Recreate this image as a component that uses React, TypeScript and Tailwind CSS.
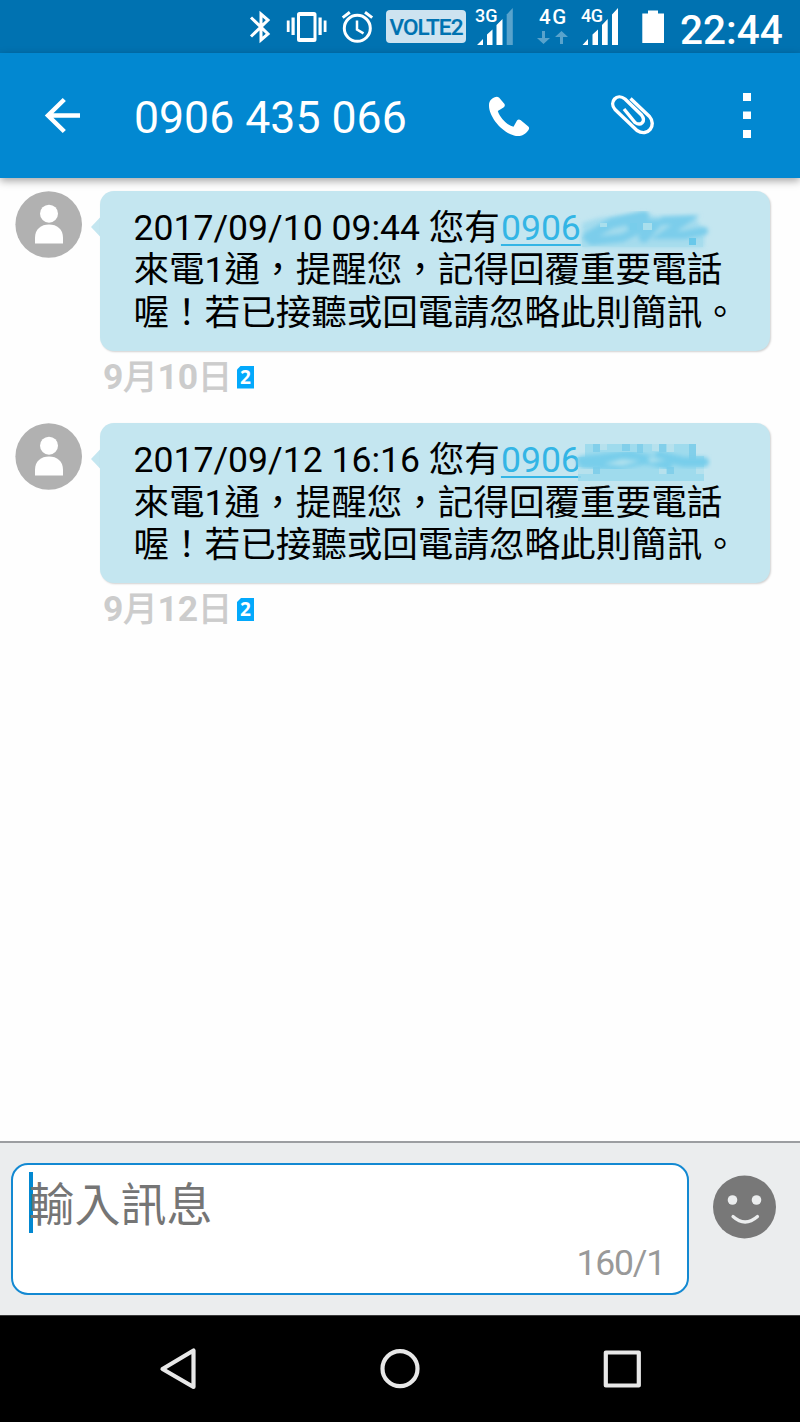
import React from "react";

const FONT = "font-['Roboto','Noto_Sans_CJK_TC',sans-serif]";

function StatusBar() {
  return (
    <header className="flex h-[53px] items-start justify-end bg-[#0072b1] pr-[18px] text-white">
      <svg width="24" height="53" viewBox="248 0 24 53" fill="none" stroke="#fff" strokeWidth="3">
        <path d="M251 17.500 L268 34 L261 40 V14 L268 20 L251 36.500" />
      </svg>
      <svg width="64" height="53" viewBox="272 0 64 53" fill="#fff" className="-mr-[1px]">
        <path fillRule="evenodd" d="M299.5 12 H314 Q316.500 12 316.500 14.500 V39.500 Q316.500 42 314 42 H299.500 Q297 42 297 39.500 V14.500 Q297 12 299.500 12 Z M300 16 V38 H313.500 V16 Z" />
        <rect x="291.500" y="17.500" width="3.200" height="17.500" />
        <rect x="286.800" y="20.500" width="2.800" height="11.500" />
        <rect x="318.500" y="17.500" width="3.200" height="17.500" />
        <rect x="323.700" y="20.500" width="2.800" height="11.500" />
      </svg>
      <svg width="51" height="53" viewBox="335 0 51 53" fill="none" stroke="#fff" strokeWidth="3">
        <circle cx="357.300" cy="28.300" r="13" />
        <path d="M357 20.500 V29.500 L363.500 33.300" strokeWidth="2.500" />
        <path d="M342.700 17.600 L349.800 12.300 M365 12.300 L372.200 17.600" />
      </svg>
      <div className="mt-[10px] flex h-[33px] w-[80px] items-center justify-center rounded-[4px] bg-[#cde3f0] pt-[2px] text-[22.500px] font-medium leading-none tracking-[-0.900px] text-[#0072b1] [-webkit-text-stroke:0.200px_#0072b1]">
        VOLTE2
      </div>
      <div className="relative ml-[10px] h-[53px] w-[38px]">
        <span className="absolute left-[-1px] top-[7px] text-[18px] font-medium leading-none">3G</span>
        <svg width="38" height="53" viewBox="476 0 38 53" fill="#fff" className="block">
          <path d="M477 45 L483 39 V45 Z M487 45 V34.500 L492.500 29.500 V45 Z M496.500 45 V25 L502.500 19 V45 Z" />
          <path d="M506.700 45 V14.500 L512.800 8 V45 Z" opacity=".35" />
        </svg>
      </div>
      <div className="relative ml-[22px] h-[53px] w-[34px]">
        <span className="absolute left-[3px] top-[7px] text-[20.500px] font-medium leading-none tracking-[1.500px]">4G</span>
        <svg width="34" height="53" viewBox="536 0 34 53" fill="#fff" opacity=".35" className="block">
          <path d="M542 31 H545 V38 H550 L543.500 44 L537 38 H542 Z M560 44 H563 V37 H568 L561.500 31 L555 37 H560 Z" />
        </svg>
      </div>
      <div className="relative ml-[12px] h-[53px] w-[38px]">
        <span className="absolute left-[-1px] top-[7px] text-[18px] font-medium leading-none tracking-[-0.600px]">4G</span>
        <svg width="38" height="53" viewBox="582 0 38 53" fill="#fff" className="block">
          <path d="M582.500 45 L588 39 V45 Z M592.500 45 V34.500 L598 29.500 V45 Z M602 45 V25 L607.700 19 V45 Z M612 45 V14.500 L618 8 V45 Z" />
        </svg>
      </div>
      <svg width="60" height="53" viewBox="620 0 60 53" fill="#fff">
        <path d="M648 10.500 H658 V13.500 H664 V43 H642.300 V13.500 H648 Z" />
      </svg>
      <span className="w-[102px] whitespace-nowrap pt-[10px] text-[40.500px] font-medium leading-[40px]">22:44</span>
    </header>
  );
}

function TitleBar() {
  return (
    <div className="relative z-10 flex h-[125px] items-center bg-[#0288d1] text-white shadow-[0_3px_8px_rgba(0,0,0,0.350)]">
      <svg width="134" height="125" viewBox="0 53 134 125" fill="none" stroke="#fff" strokeWidth="4.500">
        <path d="M80 115.500 H48 M64.300 99.500 L48 115.500 L64.300 131.500" />
      </svg>
      <h1 className="w-[346px] whitespace-nowrap pt-[6px] text-[44.600px] font-normal leading-none">0906 435 066</h1>
      <svg width="320" height="125" viewBox="480 53 320 125" fill="#fff">
        <path d="M489 105 C489 100 493 97 497 96.700 L499 97.500 L504.500 104 Q505.500 106 503.500 107.500 L497.800 111 C500 118 507 125 513.500 126.800 L517 120.500 Q518.500 118.700 520.500 120 L528.300 126.500 Q529.800 128 528.500 130 C525 134.500 522 136.500 516 136 C503 134 488.500 117 489 105 Z" />
        <path
          d="M630.500 98.500 L649.500 116.500 C657 125 648 137.500 637 130.500 L615 109.500 C608.500 102 617 92.500 625 99 L641.500 115 C646.500 121.500 640.500 126.500 635 122.500 L624 109"
          fill="none"
          stroke="#fff"
          strokeWidth="3.400"
          strokeLinejoin="round"
        />
        <path d="M743 93 H751 V101 H743 Z M743 111.500 H751 V119 H743 Z M743 130 H751 V138 H743 Z" />
      </svg>
    </div>
  );
}

function SmudgeOne() {
  return (
    <svg width="140" height="50" viewBox="576 205 140 50" className="absolute left-[75px] top-[-1px]">
      <defs>
        <filter id="soft-a" x="-10%" y="-20%" width="120%" height="140%">
          <feGaussianBlur stdDeviation="2.200" />
        </filter>
      </defs>
      <path d="M582 222 L598 217 L645 212 L655 215 H694 L704 230 V246 H582 Z" fill="#99d8ed" opacity=".75" filter="url(#soft-a)" />
      <path d="M582 236 H703 V246 H582 Z" fill="#a5dcec" opacity=".7" />
      <g fill="none" stroke="#7ccdeb" strokeLinecap="round" filter="url(#soft-a)">
        <path d="M588 236 L612 222 L644 215" strokeWidth="10" />
        <path d="M592 240 L622 237 L648 224" strokeWidth="8" />
        <path d="M632 224 H654 L644 236" strokeWidth="11" />
        <path d="M664 220 L686 219 L664 234 H684 L704 230" strokeWidth="8" />
      </g>
      <g fill="#a9dfed">
        <rect x="600" y="222" width="7" height="4" />
        <rect x="643" y="222" width="9" height="7" />
      </g>
      <rect x="630" y="222" width="7" height="7" fill="#78cdeb" />
      <rect x="689" y="237" width="7" height="7" fill="#68c8ea" />
    </svg>
  );
}

function SmudgeTwo() {
  return (
    <svg width="140" height="50" viewBox="572 438 140 50" className="absolute left-[71px] top-[-1px]">
      <defs>
        <filter id="soft-b" x="-10%" y="-20%" width="120%" height="140%">
          <feGaussianBlur stdDeviation="2.200" />
        </filter>
      </defs>
      <path d="M578 457 H585 V444 H696 V456 H704 V481 H578 Z" fill="#99d8ec" opacity=".85" />
      <g fill="#82cfea">
        <path d="M593 444 H600 V452 H593 Z M622 444 H630 V451 H622 Z M637 444 H643 V453 H637 Z M659 444 H666 V452 H659 Z M689 444 H696 V460 H689 Z M593 467 H600 V474 H593 Z M667 467 H674 V474 H667 Z" />
      </g>
      <g fill="#b6e1ed">
        <path d="M600 444 H607 V450 H600 Z M652 444 H659 V451 H652 Z M667 444 H674 V452 H667 Z M578 467 H593 V474 H578 Z M659 467 H666 V474 H659 Z M696 467 H704 V474 H696 Z" />
      </g>
      <g fill="none" stroke="#78ceeb" strokeLinecap="round" filter="url(#soft-b)">
        <path d="M582 461 L602 459 L630 455 L648 460" strokeWidth="10" />
        <path d="M584 464 L616 466 L646 460 L668 466" strokeWidth="8" />
        <path d="M660 456 L684 462 H704" strokeWidth="10" />
      </g>
      <path d="M604 464 L622 459 L640 461 L622 466 Z M648 457 L666 460 L650 463 Z" fill="#b0e1ee" filter="url(#soft-b)" />
    </svg>
  );
}

function DateLabel({ month, day }: { month: string; day: string }) {
  const cjk = "font-normal text-[34.500px] [-webkit-text-stroke:0.800px_#cccccc]";
  return (
    <span className="w-[134px] whitespace-nowrap font-bold tracking-[-0.200px]">
      {month}
      <span className={cjk}>月</span>
      {day}
      <span className={cjk}>日</span>
    </span>
  );
}

type MessageProps = { stamp: string; month: string; day: string; smudge: React.ReactNode };

function Message({ stamp, month, day, smudge }: MessageProps) {
  return (
    <article className="flex h-[232.400px] items-start pl-[15px]">
      <svg width="67" height="67" viewBox="0 0 67 67" className="shrink-0">
        <circle cx="33.700" cy="33.500" r="33.300" fill="#b1b1b1" />
        <circle cx="34" cy="22.700" r="9" fill="#fff" />
        <path d="M20 52.500 V47 C20 38 26 33.500 34 33.500 C42 33.500 48 38 48 47 V52.500 Z" fill="#fff" />
      </svg>
      <svg width="18" height="60" viewBox="0 0 18 60" className="shrink-0">
        <path d="M18 26.500 L9 36 L18 45.500 Z" fill="#c4e6f0" />
      </svg>
      <div>
        <div className="h-[160px] w-[670px] rounded-[14px] bg-[#c4e6f0] pl-[33.500px] pt-[16px] text-[35.550px] leading-[42.300px] text-black shadow-[1px_1px_2px_rgba(0,0,0,0.180)]">
          <p className="whitespace-nowrap">
            {stamp} 您有
            <span className="relative ml-[1px] inline-block h-[42px] align-top text-[#33b5e5]">
              <span className="underline decoration-2 underline-offset-[4px]">0906</span>
              {smudge}
            </span>
          </p>
          <p className="whitespace-nowrap">來電1通，提醒您，記得回覆重要電話</p>
          <p className="whitespace-nowrap">喔！若已接聽或回電請忽略此則簡訊。</p>
        </div>
        <div className="flex items-center pl-[3px] pt-[5px] text-[35.500px] leading-[42px] text-[#cccccc]">
          <DateLabel month={month} day={day} />
          <span className="flex h-[23px] w-[17px] items-center justify-center bg-[#03a9fc] font-['Open_Sans'] text-[19px] font-bold leading-none text-white [clip-path:polygon(4px_0,100%_0,100%_100%,0_100%,0_4px)]">
            2
          </span>
        </div>
      </div>
    </article>
  );
}

function Composer() {
  return (
    <footer className="flex h-[174px] items-start border-t-[2px] border-[#9c9ea1] bg-[#ebedee] pl-[11px] pt-[20px]">
      <div className="relative h-[132px] w-[678px] rounded-[17px] border-[2px] border-[#1389d2] bg-white">
        <div className="flex pl-[16px] pt-[7px]">
          <div className="h-[61px] w-[4px] bg-[#0288d1]" />
          <span className="-ml-[4.500px] text-[46px] leading-[67px] text-[#757575]">輸入訊息</span>
        </div>
        <span className="absolute bottom-[9px] right-[22px] text-[35.500px] leading-[42px] tracking-[-1.200px] text-[#999999]">160/1</span>
      </div>
      <svg width="64" height="64" viewBox="0 0 64 64" className="ml-[24px] mt-[12px]">
        <circle cx="31.500" cy="32" r="31.500" fill="#787878" />
        <circle cx="19.500" cy="25" r="4.800" fill="#ebedee" />
        <circle cx="43.500" cy="25" r="4.800" fill="#ebedee" />
        <path d="M20 41.500 Q32 52.500 44.500 41.500" fill="none" stroke="#ebedee" strokeWidth="3.200" strokeLinecap="round" />
      </svg>
    </footer>
  );
}

function NavBar() {
  return (
    <nav className="h-[107px] border-t border-[#3a3a3a] bg-black">
      <svg width="800" height="106" viewBox="0 1316 800 106" fill="none" stroke="#e8e8e8" strokeWidth="4.200" strokeLinejoin="round">
        <path d="M193.500 1350.500 V1387 L162.500 1369 Z" />
        <circle cx="400" cy="1368.700" r="17.500" />
        <rect x="605.800" y="1352.500" width="33" height="33" />
      </svg>
    </nav>
  );
}

export default function App() {
  return (
    <div className={`flex h-[1422px] w-[800px] flex-col overflow-hidden bg-[#fefefe] ${FONT}`} lang="zh-Hant">
      <StatusBar />
      <TitleBar />
      <main className="flex-1 pt-[13px]">
        <Message stamp="2017/09/10 09:44" month="9" day="10" smudge={<SmudgeOne />} />
        <Message stamp="2017/09/12 16:16" month="9" day="12" smudge={<SmudgeTwo />} />
      </main>
      <Composer />
      <NavBar />
    </div>
  );
}
